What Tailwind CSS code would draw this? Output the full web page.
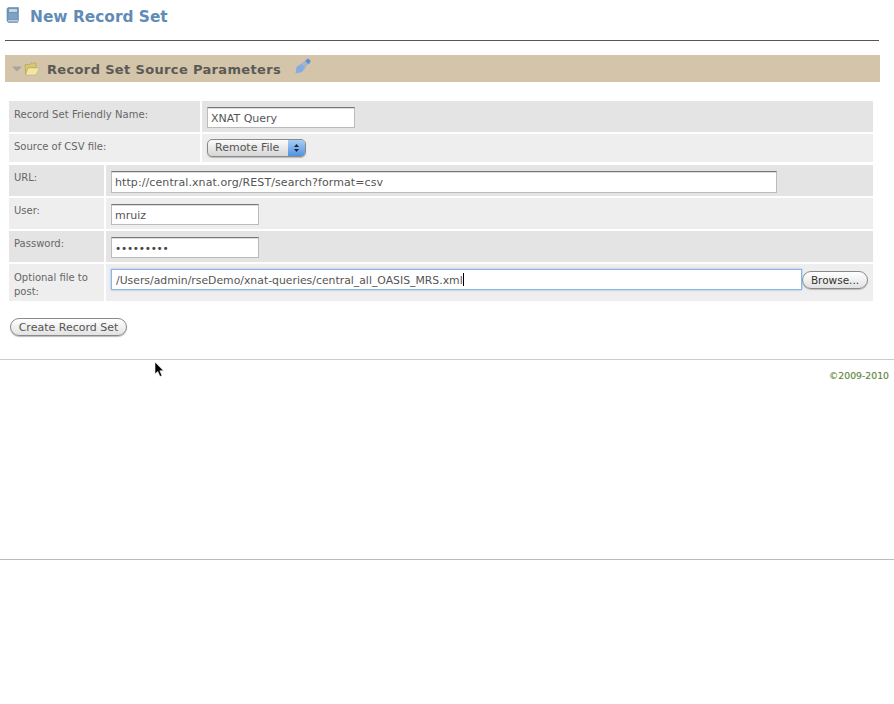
<!doctype html>
<html>
  <head>
    <meta charset="UTF-8" />
    <title>New Record Set</title>
    <script src="https://cdn.jsdelivr.net/npm/@tailwindcss/browser@4"></script>
  </head>
  <body class="relative h-[704px] w-[894px] overflow-hidden bg-white font-['DejaVu_Sans',sans-serif] text-[#666]">
    <header class="ml-[5px] h-[41px] w-[874px] border-b border-[#555]">
      <div class="flex h-[35px] items-center">
        <svg class="ml-px mt-[-6px] h-[16px] w-[13px]" viewBox="0 0 13 16">
          <path d="M1 1.500L2.500 0.500H12.500V13.500L11.500 15.500H2.500L1 14Z" fill="#6d93b8" stroke="#6a8cae" stroke-width="0.6" />
          <rect x="3" y="2" width="8" height="3" fill="#c4d5e6" />
          <rect x="2.500" y="6" width="9" height="6.500" fill="#7fa2c4" />
          <rect x="2" y="13" width="10" height="1.500" fill="#b9cde0" />
        </svg>
        <h1 class="ml-[11px] text-[15.4px] font-bold leading-none text-[#5f8cb6]">New Record Set</h1>
      </div>
    </header>

    <section class="ml-[5px] mt-[14px] flex h-[27px] w-[875px] items-center bg-[#d4c4aa]">
      <svg class="ml-[7px] h-[6px] w-[10px]" viewBox="0 0 10 6"><path d="M0 0.500H10L5 5.500Z" fill="#a5a59f" /></svg>
      <svg class="ml-[2px] mt-[1px] h-[14px] w-[16px]" viewBox="0 0 16 14">
        <path d="M1 2.500H6L7 1H12V6H4L1.500 13Z" fill="#d9c66e" stroke="#a89a55" stroke-width="0.5" />
        <path d="M4 6H15.500L12 13H1.500Z" fill="#f2e6a6" stroke="#b5a862" stroke-width="0.5" />
      </svg>
      <h2 class="ml-[7px] mt-[1px] text-[13px] font-bold leading-none tracking-[0.35px] text-[#5a5a56]">Record Set Source Parameters</h2>
      <svg class="ml-[14px] mt-[-5px] h-[16px] w-[16px]" viewBox="0 0 16 16">
        <path d="M0.500 15.500L1.500 9L6.500 5.500L10.500 9.500L7 14Z" fill="#86ace0" />
        <path d="M6.500 5.500L10 3L13 6L10.500 9.500Z" fill="#a3b4c6" />
        <path d="M10 3L13 0.500L15.500 2.500L15 5L13 6Z" fill="#5c8fd6" />
      </svg>
    </section>

    <div class="ml-[9px] mt-[19px] flex w-[864px] flex-col text-[10px] leading-[14px]">
      <div class="flex h-[31px] gap-[2px]">
        <label class="w-[191px] bg-[#e4e4e4] pl-[5px] pt-[7px] tracking-[0.05px]">Record Set Friendly Name:</label>
        <div class="flex-1 bg-[#e4e4e4] pl-[5px] pt-[6px]">
          <input value="XNAT Query" class="h-[21px] w-[148px] border border-[#bbb] border-t-[#777] bg-white px-[3px] pt-[2px] text-[11px] text-[#555] shadow-[inset_0_1px_0_#ddd]" />
        </div>
      </div>
      <div class="mt-[2px] flex h-[28px] gap-[2px]">
        <label class="w-[191px] bg-[#eeeeee] pl-[5px] pt-[6px]">Source of CSV file:</label>
        <div class="flex-1 bg-[#eeeeee] pl-[5px] pt-[5px]">
          <div class="flex h-[18px] w-[99px] overflow-hidden rounded-[5px] border border-[#8a8a8a] bg-gradient-to-b from-[#fbfbfb] to-[#d6d6d6] shadow-[0_1px_1px_#bbb]">
            <span class="flex-1 pl-[7px] text-[11px] leading-[16px] text-[#555]">Remote File</span>
            <span class="flex w-[17px] flex-col items-center justify-center gap-[2px] bg-gradient-to-b from-[#a9cdf2] to-[#4d94e0]">
              <svg class="h-[3px] w-[5px]" viewBox="0 0 5 3"><path d="M2.500 0L5 3H0Z" fill="#223" /></svg>
              <svg class="h-[3px] w-[5px]" viewBox="0 0 5 3"><path d="M0 0H5L2.500 3Z" fill="#223" /></svg>
            </span>
          </div>
        </div>
      </div>
      <div class="mt-[3px] flex h-[31px] gap-[2px]">
        <label class="w-[95px] bg-[#e4e4e4] pl-[5px] pt-[6px]">URL:</label>
        <div class="flex-1 bg-[#e4e4e4] pl-[5px] pt-[6px]">
          <input value="http://central.xnat.org/REST/search?format=csv" class="h-[22px] w-[666px] border border-[#bbb] border-t-[#777] bg-white px-[3px] text-[11px] tracking-[0.09px] text-[#555] shadow-[inset_0_1px_0_#ddd]" />
        </div>
      </div>
      <div class="mt-[2px] flex h-[31px] gap-[2px]">
        <label class="w-[95px] bg-[#eeeeee] pl-[5px] pt-[6px]">User:</label>
        <div class="flex-1 bg-[#eeeeee] pl-[5px] pt-[6px]">
          <input value="mruiz" class="h-[21px] w-[148px] border border-[#bbb] border-t-[#777] bg-white px-[3px] pt-[2px] text-[11px] text-[#555] shadow-[inset_0_1px_0_#ddd]" />
        </div>
      </div>
      <div class="mt-[2px] flex h-[31px] gap-[2px]">
        <label class="w-[95px] bg-[#e4e4e4] pl-[5px] pt-[6px]">Password:</label>
        <div class="flex-1 bg-[#e4e4e4] pl-[5px] pt-[6px]">
          <input type="password" value="xxxxxxxxx" class="h-[21px] w-[148px] border border-[#bbb] border-t-[#777] bg-white px-[3px] text-[10.5px] tracking-[-0.25px] text-[#444] shadow-[inset_0_1px_0_#ddd]" />
        </div>
      </div>
      <div class="mt-[2px] flex h-[37px] gap-[2px]">
        <label class="w-[95px] bg-[#eeeeee] pl-[5px] pt-[7px] leading-[14px]">Optional file to post:</label>
        <div class="flex flex-1 items-start bg-[#eeeeee] pl-[5px] pt-[5px]">
          <div class="relative">
            <input value="/Users/admin/rseDemo/xnat-queries/central_all_OASIS_MRS.xml" class="block h-[21px] w-[691px] border border-[#8db4e2] bg-white px-[4px] pt-[2px] text-[10.85px] text-[#555] shadow-[0_0_2px_#8db4e2]" />
            <span class="absolute left-[352px] top-[4px] h-[13px] w-px bg-black"></span>
          </div>
          <button class="mt-[2px] h-[18px] w-[66px] rounded-full border border-[#8a8a8a] bg-gradient-to-b from-white to-[#e2e2e2] text-[10.5px] leading-[14px] text-[#333] shadow-[0_1px_1px_#bbb]">Browse...</button>
        </div>
      </div>
    </div>

    <button class="ml-[10px] mt-[17px] block h-[18px] w-[117px] rounded-full border border-[#8a8a8a] bg-gradient-to-b from-white to-[#e2e2e2] pt-[1px] text-[11px] leading-[14px] text-[#555] shadow-[0_1px_1px_#bbb]">Create Record Set</button>

    <footer class="mt-[23px] border-t border-[#ccc] pr-[5px] pt-[10px] text-right text-[9.3px] leading-[12px] text-[#6b7f58] [text-shadow:0_0_1px_#b7e08a]">©2009-2010</footer>
    <div class="mt-[177px] border-t border-[#bbb]"></div>

    <svg class="absolute left-[154px] top-[361px] h-[17px] w-[11px]" viewBox="0 0 11 17">
      <path d="M1 1V13L3.800 10.500L6 15.500L8 14.500L5.800 9.800H9.500Z" fill="#000" stroke="#fff" stroke-width="0.6" />
    </svg>
  </body>
</html>
